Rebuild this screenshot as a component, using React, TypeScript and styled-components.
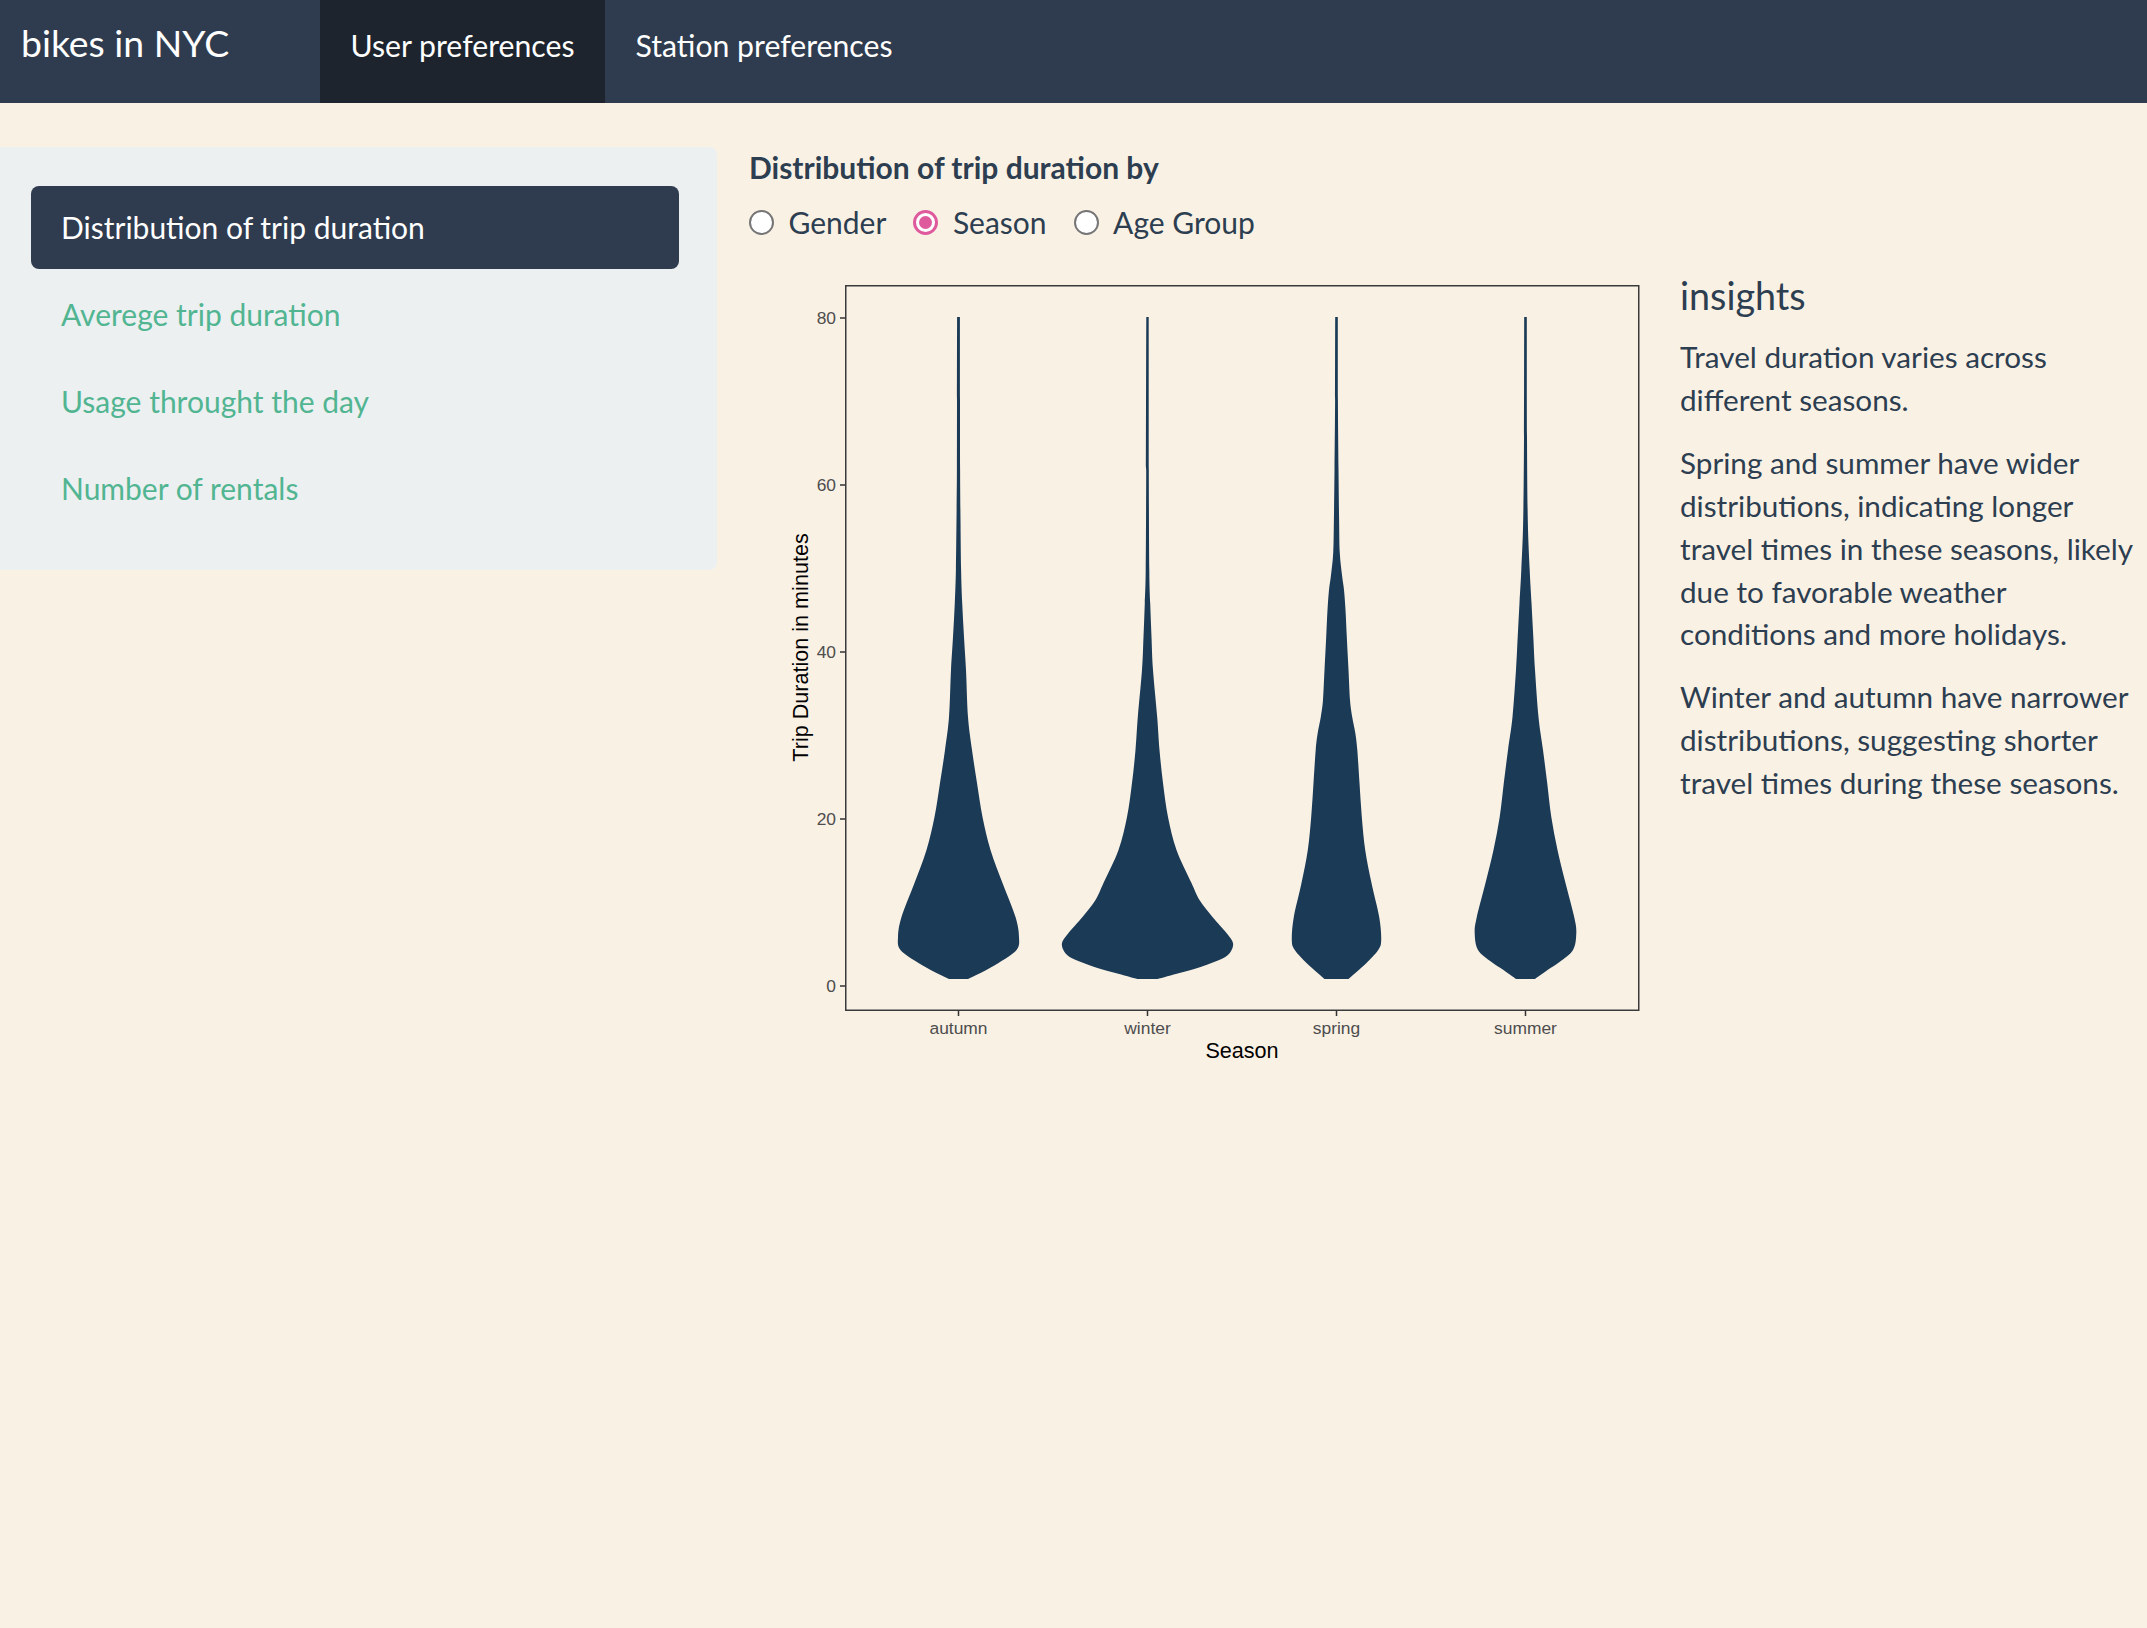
import React from "react";
import styled, { createGlobalStyle } from "styled-components";

const CREAM = "#FAF1E5";
const NAVY = "#2f3b4e";
const TEXT = "#2c3e50";
const GREEN = "#52b592";
const PINK = "#df5a9c";
const VIOLIN = "#1a3a56";

const GlobalStyle = createGlobalStyle`
  html, body { margin: 0; padding: 0; background: ${CREAM}; }
  body { font-family: Lato, "Open Sans", sans-serif; color: ${TEXT}; }
  *, *::before, *::after { box-sizing: border-box; }
`;

const Page = styled.div`
  min-height: 1628px;
  background: ${CREAM};
`;

const NavBar = styled.nav`
  display: flex;
  height: 103px;
  background: ${NAVY};
`;

const Brand = styled.div`
  width: 320px;
  padding: 19.5px 0 0 21px;
  font-size: 37.4px;
  line-height: 46px;
  color: #fff;
`;

const NavTab = styled.a<{ $active?: boolean }>`
  display: block;
  padding: 24.5px 30.5px 0;
  font-size: 30.2px;
  line-height: 40px;
  color: #fff;
  text-decoration: none;
  background: ${(p) => (p.$active ? "#1d242d" : "transparent")};
`;

const Body = styled.div`
  display: flex;
  align-items: flex-start;
  gap: 32px;
  padding-top: 42.5px;
`;

const Well = styled.aside`
  width: 717px;
  flex: none;
  margin-top: 1.5px;
  padding: 39px 38px 41px 31px;
  background: #ecf0f1;
  border-radius: 0 8px 8px 0;
  display: flex;
  flex-direction: column;
  gap: 4px;
`;

const Pill = styled.a<{ $active?: boolean }>`
  display: block;
  padding: 20px 30px;
  border-radius: 8px;
  font-size: 30px;
  line-height: 42.86px;
  color: ${(p) => (p.$active ? "#fff" : GREEN)};
  background: ${(p) => (p.$active ? NAVY : "transparent")};
  text-decoration: none;
`;

const Main = styled.main`
  flex: 1;
  min-width: 0;
  display: flex;
  flex-direction: column;
`;

const FieldLabel = styled.div`
  font-weight: 700;
  font-size: 30px;
  line-height: 43px;
`;

const RadioRow = styled.div`
  display: flex;
  align-items: center;
  height: 43px;
  margin-top: 12px;
`;

const RadioItem = styled.label`
  display: flex;
  align-items: center;
  gap: 14.5px;
  margin-right: 27px;
  font-size: 30px;
  line-height: 43px;
`;

const RadioDot = styled.span<{ $checked?: boolean }>`
  position: relative;
  width: 25px;
  height: 25px;
  border-radius: 50%;
  background: #fff;
  border: ${(p) => (p.$checked ? `3px solid ${PINK}` : "2px solid #767676")};
  &::after {
    content: "";
    position: absolute;
    inset: 3px;
    border-radius: 50%;
    background: ${(p) => (p.$checked ? PINK : "transparent")};
  }
`;

const ContentRow = styled.div`
  display: flex;
  margin-top: 18.5px;
`;

const Chart = styled.svg`
  display: block;
  flex: none;
`;

const Insights = styled.section`
  flex: 1;
  margin-left: 20px;
`;

const InsightsTitle = styled.h4`
  margin: 12.5px 0 20px;
  font-size: 37.7px;
  line-height: 41.8px;
  font-weight: 400;
`;

const Para = styled.p`
  margin: 0 0 20px;
  font-size: 29.7px;
  line-height: 42.86px;
`;

type Pt = [number, number];

const profiles: { cx: number; pts: Pt[] }[] = [
  {
    cx: 958.5,
    pts: [
      [317, 1.4], [400, 1.5], [470, 1.6], [520, 2], [570, 2.6], [603, 3.7], [637, 5.5],
      [670, 7.5], [717, 9.5], [750, 13.5], [783, 18.5], [817, 24], [850, 32], [883, 44],
      [917, 57], [937, 60.5], [950, 58], [963, 40], [972, 24], [979, 9.5],
    ],
  },
  {
    cx: 1147.5,
    pts: [
      [317, 1.2], [470, 1.3], [570, 1.8], [603, 2.7], [637, 4], [670, 5.5], [717, 9.7],
      [750, 12], [783, 15.5], [817, 20.5], [850, 29], [883, 44], [900, 52], [917, 65],
      [933, 79], [943, 85.5], [952, 83], [958, 76], [963, 64], [968, 50], [973, 32], [979, 10],
    ],
  },
  {
    cx: 1336.5,
    pts: [
      [317, 1.3], [400, 1.4], [470, 2], [520, 2.6], [553, 3.3], [575, 5.5], [590, 7.5],
      [610, 9], [637, 10.3], [670, 12], [700, 13.5], [717, 15.7], [733, 18.8], [750, 20.8],
      [783, 23], [817, 25.3], [850, 28.7], [883, 35], [917, 42.7], [940, 44.7], [950, 41.7],
      [963, 30], [972, 20], [979, 12],
    ],
  },
  {
    cx: 1525.5,
    pts: [
      [317, 1.3], [437, 1.5], [520, 2.3], [570, 4.2], [603, 6], [637, 7.8], [670, 9.5],
      [717, 13], [750, 17.5], [783, 21.7], [817, 25.8], [850, 32], [883, 40], [917, 48.7],
      [933, 50.8], [950, 47.5], [962, 34], [970, 22], [979, 9.5],
    ],
  },
];

function curveThrough(points: Pt[]): string {
  let d = "";
  for (let i = 0; i < points.length - 1; i++) {
    const p0 = points[Math.max(0, i - 1)];
    const p1 = points[i];
    const p2 = points[i + 1];
    const p3 = points[Math.min(points.length - 1, i + 2)];
    const c1: Pt = [p1[0] + (p2[0] - p0[0]) / 6, p1[1] + (p2[1] - p0[1]) / 6];
    const c2: Pt = [p2[0] - (p3[0] - p1[0]) / 6, p2[1] - (p3[1] - p1[1]) / 6];
    d += ` C ${c1[0].toFixed(2)} ${c1[1].toFixed(2)} ${c2[0].toFixed(2)} ${c2[1].toFixed(2)} ${p2[0].toFixed(2)} ${p2[1].toFixed(2)}`;
  }
  return d;
}

function violinPath(cx: number, pts: Pt[]): string {
  const right: Pt[] = pts.map(([y, h]) => [cx + h, y]);
  const left: Pt[] = pts.map(([y, h]) => [cx - h, y] as Pt).reverse();
  const first = pts[0];
  let d = `M ${cx - first[1]} ${first[0]} L ${right[0][0]} ${right[0][1]}`;
  d += curveThrough(right);
  d += ` L ${left[0][0]} ${left[0][1]}`;
  d += curveThrough(left);
  return d + " Z";
}

const yTicks = [0, 20, 40, 60, 80];
const yOf = (v: number) => 986 - v * 8.35;
const seasons = [
  { name: "autumn", x: 958.5 },
  { name: "winter", x: 1147.5 },
  { name: "spring", x: 1336.5 },
  { name: "summer", x: 1525.5 },
];

const CHART_FONT = "'Liberation Sans', Arial, sans-serif";

const TripChart: React.FC = () => (
  <Chart width={911} height={830} viewBox="749 262 911 830">
    {profiles.map((p) => (
      <path key={p.cx} d={violinPath(p.cx, p.pts)} fill={VIOLIN} />
    ))}
    <rect x={845.75} y={285.75} width={793} height={724.5} fill="none" stroke="#3a3a3a" strokeWidth={1.5} />
    {yTicks.map((v) => (
      <g key={v}>
        <line x1={840} x2={845} y1={yOf(v)} y2={yOf(v)} stroke="#333" strokeWidth={1.5} />
        <text x={836} y={yOf(v) + 6.2} textAnchor="end" fontFamily={CHART_FONT} fontSize={17.4} fill="#4d4d4d">
          {v}
        </text>
      </g>
    ))}
    {seasons.map((s) => (
      <g key={s.name}>
        <line x1={s.x} x2={s.x} y1={1010.5} y2={1016} stroke="#333" strokeWidth={1.5} />
        <text x={s.x} y={1034} textAnchor="middle" fontFamily={CHART_FONT} fontSize={17.4} fill="#4d4d4d">
          {s.name}
        </text>
      </g>
    ))}
    <text x={1242} y={1058} textAnchor="middle" fontFamily={CHART_FONT} fontSize={21.6} fill="#000">
      Season
    </text>
    <text
      transform="translate(808 647.5) rotate(-90)"
      textAnchor="middle"
      fontFamily={CHART_FONT}
      fontSize={21.6}
      fill="#000"
    >
      Trip Duration in minutes
    </text>
  </Chart>
);

const App: React.FC = () => (
  <Page>
    <GlobalStyle />
    <NavBar>
      <Brand>bikes in NYC</Brand>
      <NavTab $active>User preferences</NavTab>
      <NavTab>Station preferences</NavTab>
    </NavBar>
    <Body>
      <Well>
        <Pill $active>Distribution of trip duration</Pill>
        <Pill>Averege trip duration</Pill>
        <Pill>Usage throught the day</Pill>
        <Pill>Number of rentals</Pill>
      </Well>
      <Main>
        <FieldLabel>Distribution of trip duration by</FieldLabel>
        <RadioRow>
          <RadioItem>
            <RadioDot />
            Gender
          </RadioItem>
          <RadioItem>
            <RadioDot $checked />
            Season
          </RadioItem>
          <RadioItem>
            <RadioDot />
            Age Group
          </RadioItem>
        </RadioRow>
        <ContentRow>
          <TripChart />
          <Insights>
            <InsightsTitle>insights</InsightsTitle>
            <Para>Travel duration varies across different seasons.</Para>
            <Para>
              Spring and summer have wider distributions, indicating longer travel times in these
              seasons, likely due to favorable weather conditions and more holidays.
            </Para>
            <Para>
              Winter and autumn have narrower distributions, suggesting shorter travel times during
              these seasons.
            </Para>
          </Insights>
        </ContentRow>
      </Main>
    </Body>
  </Page>
);

export default App;
